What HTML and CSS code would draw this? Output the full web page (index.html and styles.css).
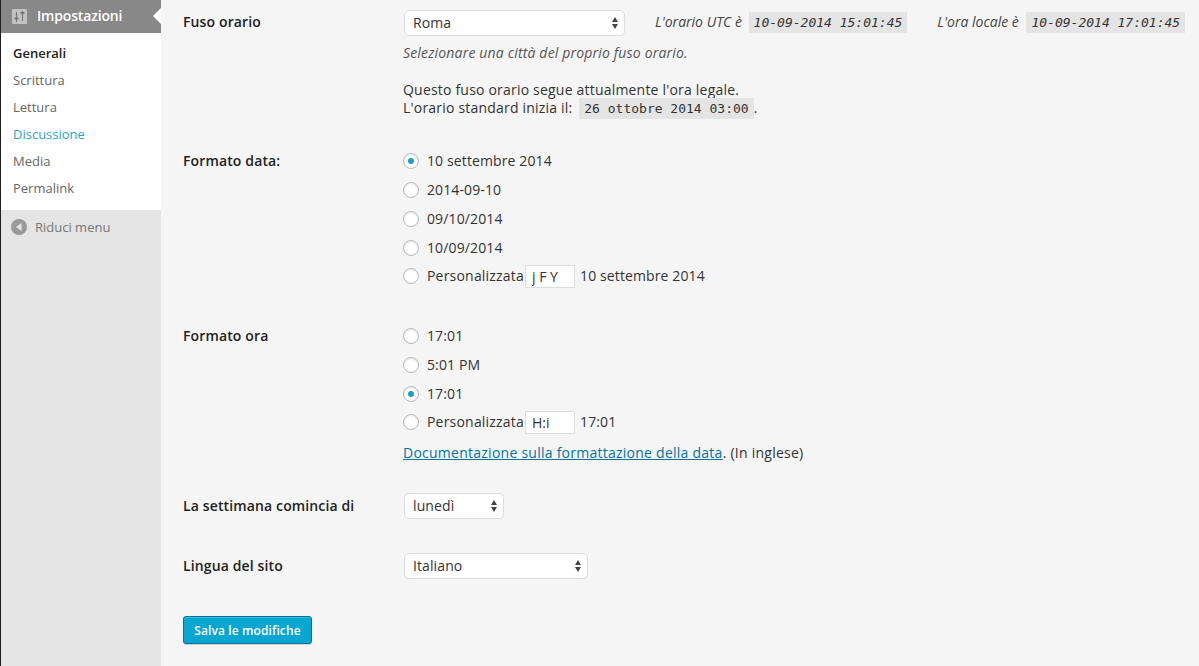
FILE: index.html
```html
<!DOCTYPE html>
<html lang="it">
<head>
    <meta charset="UTF-8">
    <meta name="viewport" content="width=device-width, initial-scale=1.0">
    <title>Impostazioni generali</title>
    <link rel="stylesheet" href="styles.css">
</head>
<body>
    <div class="layout">
        <aside class="sidebar">
            <div class="menu-head">
                <svg class="menu-icon" width="15" height="15" viewBox="0 0 15 15">
                    <rect width="15" height="15" rx="1" fill="#c2c2c2"/>
                    <path d="M4.500 3v10M10.500 2v10" stroke="#777" stroke-width="1.200" fill="none"/>
                    <path d="M2.500 9.500h4M8.500 4h4" stroke="#777" stroke-width="2" fill="none"/>
                </svg>
                <span class="menu-title">Impostazioni</span>
            </div>
            <ul class="submenu">
                <li class="current">Generali</li>
                <li>Scrittura</li>
                <li>Lettura</li>
                <li class="hover">Discussione</li>
                <li>Media</li>
                <li>Permalink</li>
            </ul>
            <div class="collapse">
                <svg width="16" height="16" viewBox="0 0 16 16">
                    <circle cx="8" cy="8" r="8" fill="#999"/>
                    <path d="M10.500 4v8L5 8z" fill="#e5e5e5"/>
                </svg>
                <span>Riduci menu</span>
            </div>
        </aside>

        <form class="content">
            <div class="row row-tz">
                <label class="row-label">Fuso orario</label>
                <div class="row-field">
                    <div class="tz-line">
                        <div class="select select-tz">
                            <select><option>Roma</option></select>
                            <svg class="arrows" width="6" height="12" viewBox="0 0 6 12"><path d="M3 0l3 5H0zM3 12L0 7h6z"/></svg>
                        </div>
                        <span class="clock clock-utc">L'orario UTC è <code>10-09-2014 15:01:45</code></span>
                        <span class="clock clock-local">L'ora locale è <code>10-09-2014 17:01:45</code></span>
                    </div>
                    <p class="hint">Selezionare una città del proprio fuso orario.</p>
                    <p class="dst">Questo fuso orario segue attualmente l'ora legale.<br>
                    L'orario standard inizia il: <code>26 ottobre 2014 03:00</code>.</p>
                </div>
            </div>

            <div class="row row-date">
                <label class="row-label">Formato data:</label>
                <div class="row-field">
                    <label class="radio"><input type="radio" name="date" checked> 10 settembre 2014</label>
                    <label class="radio"><input type="radio" name="date"> 2014-09-10</label>
                    <label class="radio"><input type="radio" name="date"> 09/10/2014</label>
                    <label class="radio"><input type="radio" name="date"> 10/09/2014</label>
                    <label class="radio radio-custom"><input type="radio" name="date"> Personalizzata<input class="custom" type="text" value="j F Y"><span class="example">10 settembre 2014</span></label>
                </div>
            </div>

            <div class="row row-time">
                <label class="row-label">Formato ora</label>
                <div class="row-field">
                    <label class="radio"><input type="radio" name="time"> 17:01</label>
                    <label class="radio"><input type="radio" name="time"> 5:01 PM</label>
                    <label class="radio"><input type="radio" name="time" checked> 17:01</label>
                    <label class="radio radio-custom"><input type="radio" name="time"> Personalizzata<input class="custom" type="text" value="H:i"><span class="example">17:01</span></label>
                    <p class="doc"><a href="#">Documentazione sulla formattazione della data</a>. (In inglese)</p>
                </div>
            </div>

            <div class="row row-week">
                <label class="row-label">La settimana comincia di</label>
                <div class="row-field">
                    <div class="select select-week">
                        <select><option>lunedì</option></select>
                        <svg class="arrows" width="6" height="12" viewBox="0 0 6 12"><path d="M3 0l3 5H0zM3 12L0 7h6z"/></svg>
                    </div>
                </div>
            </div>

            <div class="row row-lang">
                <label class="row-label">Lingua del sito</label>
                <div class="row-field">
                    <div class="select select-lang">
                        <select><option>Italiano</option></select>
                        <svg class="arrows" width="6" height="12" viewBox="0 0 6 12"><path d="M3 0l3 5H0zM3 12L0 7h6z"/></svg>
                    </div>
                </div>
            </div>

            <button class="save" type="button">Salva le modifiche</button>
        </form>
    </div>
</body>
</html>
```

FILE: styles.css
```css
* {
    box-sizing: border-box;
}
html, body {
    height: 100%;
}
body {
    margin: 0;
    background-color: #f5f5f5;
    color: #444;
    font-family: "Open Sans", sans-serif;
    font-size: 14px;
    line-height: 18px;
    overflow: hidden;
}
.layout {
    display: flex;
    height: 666px;
}

/* menu laterale */
.sidebar {
    width: 161px;
    flex: none;
    background-color: #e5e5e5;
    border-left: 1px solid #1f1f1f;
}
.menu-head {
    position: relative;
    display: flex;
    align-items: center;
    gap: 10px;
    height: 33px;
    padding-left: 11px;
    background-color: #888;
    color: #fff;
    font-weight: 600;
    letter-spacing: -.17px;
}
.menu-title {
    margin-bottom: 2px;
}
.menu-head:after {
    content: '';
    position: absolute;
    right: 0;
    top: 8px;
    border: 8px solid transparent;
    border-right-color: #fff;
}
.submenu {
    margin: 0;
    padding: 7px 0 8px;
    list-style: none;
    background-color: #fff;
}
.submenu li {
    height: 27px;
    padding-left: 12px;
    font-size: 13px;
    line-height: 27px;
    color: #666;
}
.submenu .current {
    color: #222;
    font-weight: 600;
}
.submenu .hover {
    color: #2ea2cc;
}
.collapse {
    display: flex;
    align-items: center;
    gap: 8px;
    height: 34px;
    padding-left: 10px;
    font-size: 13px;
    color: #777;
}

/* contenuto */
.content {
    flex: 1;
    padding: 10px 0 0 22px;
}
.row {
    display: grid;
    grid-template-columns: 220px 1fr;
}
.row-label {
    font-weight: 600;
    color: #222;
    letter-spacing: .13px;
}
.row-tz .row-label {
    padding-top: 3px;
}
.tz-line {
    display: flex;
    align-items: center;
}
.select {
    position: relative;
    height: 26px;
}
.select select {
    appearance: none;
    display: block;
    width: 100%;
    height: 100%;
    padding: 0 8px 2px;
    border: 1px solid #ddd;
    border-radius: 5px;
    background-color: #fff;
    color: #333;
    font-family: inherit;
    font-size: 14px;
    letter-spacing: .1px;
}
.arrows {
    position: absolute;
    right: 7px;
    top: 7px;
    fill: #444;
}
.select-tz {
    width: 221px;
    margin-left: 1px;
}
.select-week {
    width: 100px;
    margin-left: 1px;
}
.select-lang {
    width: 184px;
    margin-left: 1px;
}
.clock {
    margin-left: 30px;
    padding-bottom: 2px;
    font-style: italic;
}
.clock-utc code {
    margin-left: 3px;
}
.clock-local code {
    margin-left: 4px;
}
code {
    padding: 3px 5px;
    background-color: #e4e4e4;
    font-family: "DejaVu Sans Mono", monospace;
    font-size: 13px;
    color: #333;
}
.hint {
    margin: 8px 0 0;
    font-style: italic;
    color: #555;
    letter-spacing: .17px;
}
.dst {
    margin: 19px 0 0;
    color: #333;
    letter-spacing: .2px;
}
.dst code {
    margin-left: 3px;
    letter-spacing: 0;
}
.radio {
    display: flex;
    align-items: center;
    height: 29px;
    color: #333;
    letter-spacing: .12px;
}
.radio-custom {
    height: 28px;
    letter-spacing: .2px;
}
.radio input[type=radio] {
    appearance: none;
    position: relative;
    width: 16px;
    height: 16px;
    margin: 0 8px 0 0;
    border: 1px solid #b4b9be;
    border-radius: 50%;
    background-color: #fff;
    box-shadow: inset 0 1px 2px rgba(0,0,0,.1);
}
.radio input[type=radio]:checked:before {
    content: '';
    position: absolute;
    left: 4px;
    top: 4px;
    width: 6px;
    height: 6px;
    border-radius: 50%;
    background-color: #1e9fc9;
}
.custom {
    width: 50px;
    height: 23px;
    margin-left: 1px;
    padding: 0 6px;
    border: 1px solid #ddd;
    background-color: #fff;
    color: #333;
    font-family: inherit;
    font-size: 14px;
}
.example {
    margin-left: 5px;
    letter-spacing: .12px;
}
.doc {
    margin: 8px 0 0;
    color: #333;
    letter-spacing: .25px;
}
.doc a {
    color: #0074a2;
}
.row-date {
    margin-top: 28px;
}
.row-date .row-label, .row-time .row-label {
    padding-top: 6px;
}
.row-time {
    margin-top: 31px;
}
.row-week {
    margin-top: 31px;
}
.row-lang {
    margin-top: 34px;
}
.row-week .row-label, .row-lang .row-label {
    line-height: 26px;
}
.save {
    display: block;
    width: 129px;
    height: 28px;
    margin-top: 37px;
    padding: 0;
    border: 1px solid #0074a2;
    border-radius: 3px;
    background-color: #09a6d1;
    box-shadow: inset 0 1px 0 rgba(120,200,230,.5), 0 1px 0 rgba(0,0,0,.15);
    color: #fff;
    font-family: inherit;
    font-size: 12px;
    font-weight: 600;
    letter-spacing: .1px;
}
```
